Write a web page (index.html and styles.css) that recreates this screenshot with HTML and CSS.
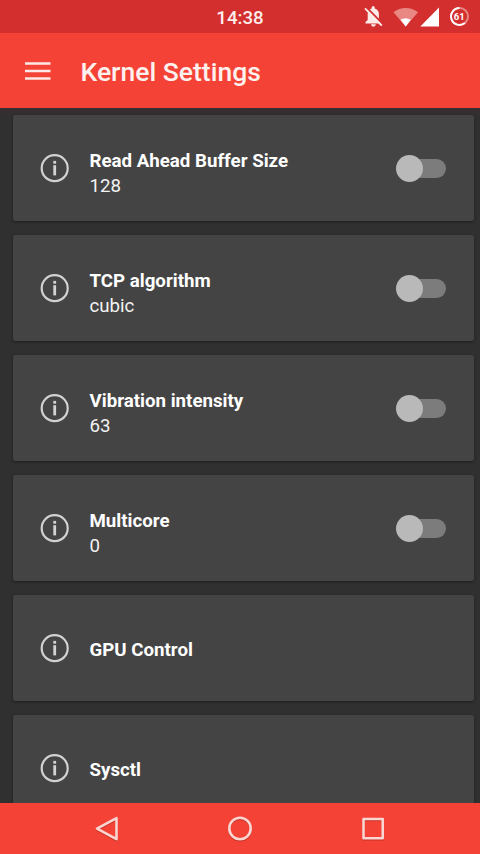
FILE: index.html
```html
<!DOCTYPE html>
<html lang="en">
<head>
<meta charset="utf-8">
<title>Kernel Settings</title>
<link rel="stylesheet" href="styles.css">
</head>
<body>
<svg class="defs" aria-hidden="true">
  <symbol id="info" viewBox="0 0 30 30">
    <circle cx="14.7" cy="15.2" r="13" fill="none" stroke="currentColor" stroke-width="2.2"/>
    <rect x="13.3" y="7.9" width="2.8" height="2.8" fill="currentColor"/>
    <rect x="13.3" y="12.2" width="2.8" height="10.2" fill="currentColor"/>
  </symbol>
</svg>
<div class="screen">
  <div class="status">
    <span class="clock">14:38</span>
    <svg class="status-icons" width="120" height="33" viewBox="0 0 120 33">
      <path d="M5.500 23.500v-1.400l2.200-2V14c0-3.100 1.500-4.900 4-5.600V7.500a1.500 1.500 0 0 1 3 0v.900c2.600.700 4.200 2.600 4.200 5.600v6.100l2.200 2v1.400z" fill="#fdebe8"/>
      <path d="M11 24.300h4.800a2.400 2.400 0 0 1-4.800 0z" fill="#fdebe8"/>
      <path d="M6.200 7.300 22.500 23.600" stroke="#d32f2f" stroke-width="2"/>
      <path d="M5 8.300 21.800 25.600" stroke="#fdebe8" stroke-width="1.900"/>
      <path d="M33.500 12.300C40.500 6.400 51 6.400 58 12.300L45.700 26.500z" fill="#e98883"/>
      <path d="M40.500 19.800q5-3 10.300 0l-5.100 6.700z" fill="#fff"/>
      <path d="M60.300 26.500 79 7.500v19z" fill="#fff"/>
      <circle cx="99.500" cy="16.500" r="8.500" fill="none" stroke="#e98883" stroke-width="1.900"/>
      <path d="M99.500 8a8.500 8.500 0 1 0 5.400 15.100" fill="none" stroke="#fff" stroke-width="1.900"/>
      <text x="99.300" y="19.900" text-anchor="middle" class="battery">61</text>
    </svg>
  </div>
  <header class="toolbar">
    <svg class="menu" viewBox="0 0 26 20"><path d="M0 2.500h25.500M0 10h25.500M0 17.500h25.500"/></svg>
    <h1>Kernel Settings</h1>
  </header>
  <main class="list">
    <section class="card">
      <svg class="info"><use href="#info"/></svg>
      <div class="text"><h2>Read Ahead Buffer Size</h2><p>128</p></div>
      <div class="switch"></div>
    </section>
    <section class="card">
      <svg class="info"><use href="#info"/></svg>
      <div class="text"><h2>TCP algorithm</h2><p>cubic</p></div>
      <div class="switch"></div>
    </section>
    <section class="card">
      <svg class="info"><use href="#info"/></svg>
      <div class="text"><h2>Vibration intensity</h2><p>63</p></div>
      <div class="switch"></div>
    </section>
    <section class="card">
      <svg class="info"><use href="#info"/></svg>
      <div class="text"><h2>Multicore</h2><p>0</p></div>
      <div class="switch"></div>
    </section>
    <section class="card">
      <svg class="info"><use href="#info"/></svg>
      <div class="text single"><h2>GPU Control</h2></div>
    </section>
    <section class="card">
      <svg class="info"><use href="#info"/></svg>
      <div class="text single"><h2>Sysctl</h2></div>
    </section>
  </main>
  <nav class="navbar">
    <svg viewBox="0 0 30 30"><path d="M5 14.700 24.500 4.200v21z"/></svg>
    <svg viewBox="0 0 30 30"><circle cx="15" cy="14.500" r="10.700"/></svg>
    <svg viewBox="0 0 30 30"><rect x="5.500" y="5" width="19.200" height="19.200"/></svg>
  </nav>
</div>
</body>
</html>
```

FILE: styles.css
```css
* { box-sizing: border-box; }
body, h1, h2, p { margin: 0; }
body { font-family: Roboto, "Liberation Sans", sans-serif; color: #fff; background: #303030; }
.defs { display: none; }
.screen { display: flex; flex-direction: column; width: 480px; height: 854px; overflow: hidden; }
.status {
  display: grid;
  grid-template-columns: 180px 120px 60px 120px;
  align-items: center;
  height: 33px;
  flex: none;
  background: #d32f2f;
}
.clock { grid-column: 2; text-align: center; font-size: 18.7px; font-weight: 500; line-height: 22px; color: #fdeeec; padding-top: 2px; }
.status-icons { grid-column: 4; }
.battery { font: 700 9.5px Roboto, sans-serif; fill: #fff; }
.toolbar {
  display: flex;
  align-items: center;
  gap: 30px;
  height: 75px;
  flex: none;
  padding-left: 24.5px;
  background: #f44336;
}
.menu { width: 26px; height: 20px; flex: none; stroke: #fde8e5; stroke-width: 2.7; fill: none; }
.toolbar h1 { font-size: 26.5px; font-weight: 500; line-height: 32px; padding-top: 2px; color: #fdf1ef; }
.list {
  flex: 1;
  min-height: 0;
  overflow: hidden;
  display: flex;
  flex-direction: column;
  gap: 14px;
  padding: 7px 6.5px 0 13px;
  background: linear-gradient(#392d30, #303030 8px);
}
.card {
  display: flex;
  align-items: center;
  flex: none;
  height: 106px;
  padding: 0 27.5px 0 26.5px;
  border-radius: 2.5px;
  background: #444;
  box-shadow: 0 1px 3px rgba(0, 0, 0, .4);
}
.info { width: 30px; height: 30px; color: #d2d2d2; margin-right: 20px; }
.text { flex: 1; padding-top: 11px; }
.text.single { padding-top: 5px; }
.text h2 { font-size: 18.7px; font-weight: 700; line-height: 25px; }
.text p { font-size: 18.7px; line-height: 25px; color: #f2f2f2; }
.switch {
  position: relative;
  width: 46px;
  height: 19px;
  border-radius: 10px;
  background: #7c7c7c;
}
.switch::before {
  content: "";
  position: absolute;
  left: -4px;
  top: -4px;
  width: 27px;
  height: 27px;
  border-radius: 50%;
  background: #b9b9b9;
}
.navbar {
  display: flex;
  justify-content: space-between;
  align-items: center;
  height: 51px;
  flex: none;
  padding: 0 92px;
  background: #f44336;
}
.navbar svg { width: 30px; height: 30px; fill: none; stroke: #fbd5d1; stroke-width: 2.6; stroke-linejoin: round; filter: drop-shadow(0 1px .5px rgba(120, 20, 10, .4)); }
```
